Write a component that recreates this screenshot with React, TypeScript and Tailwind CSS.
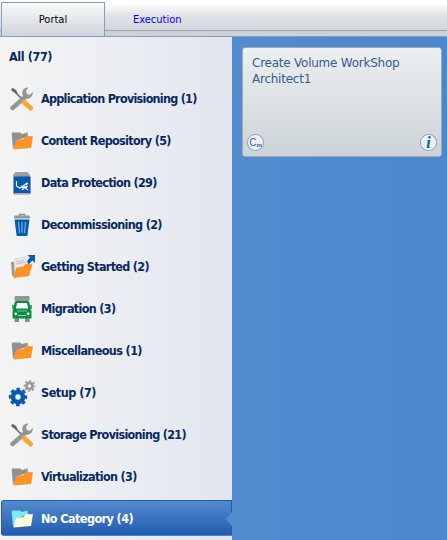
import type { ReactNode } from "react";

function Tools() {
  return (
    <svg width="24" height="24" viewBox="0 0 24 24" fill="none">
      <path d="M1 2l2-1 3 2 2 4-2-.5-4-2.500z" fill="#666" />
      <path d="M5 5l8 8" stroke="#666" strokeWidth="1.600" />
      <path d="M2.500 21L15 10" stroke="#949494" strokeWidth="4.400" strokeLinecap="round" />
      <path d="M18.500 .5c-5-.5-7.500 4-5.500 8.500 2 4 9.500 4 10-4L19.500 8 16.500 6.500 16.200 3.500z" fill="#949494" />
      <path d="M14.500 15.500L20.500 21" stroke="#ffa62b" strokeWidth="5" strokeLinecap="round" />
    </svg>
  );
}

function Folder({ active = false }: { active?: boolean }) {
  return (
    <svg width="24" height="24" viewBox="0 0 24 24">
      <path d="M3 20L1.700 4.500Q1.700 3.500 3 3.500h7l2 1.500 5.500-1.500.5 4L8 11z" fill={active ? "#7deaf5" : "#929292"} />
      <path d="M3.500 20.500L6 11 13.500 10 16 7l7 .2-2 11.800z" fill={active ? "#fffbd8" : "#fd9525"} />
    </svg>
  );
}

function DataJar() {
  return (
    <svg width="24" height="24" viewBox="0 0 24 24">
      <path d="M5.500 1h12l2.500 3v4h-17V4z" fill="#a0a0a0" />
      <rect x="3.500" y="5" width="17" height="18" rx="1.500" fill="#0759ae" stroke="#959595" />
      <path d="M5 22.500h14" stroke="#aaa" />
      <path d="M6.500 10v5l4 2.500M9 16.500h8M11 15l3 2-2 2M17 12l-4 3 4 1M16 14l2-2M15 17l3 2M15 16l3-1" fill="none" stroke="#e5f2ff" strokeWidth="1.200" />
    </svg>
  );
}

function Trash() {
  return (
    <svg width="24" height="24" viewBox="0 0 24 24">
      <path d="M9.500 3V1.500h5V3" fill="none" stroke="#8c9393" strokeWidth="1.500" />
      <rect x="4" y="2.500" width="16" height="3" rx="1" fill="#929898" />
      <path d="M4.500 6.500h15l-2 15.500q0 1-1 1h-9q-1 0-1-1z" fill="#075cae" />
      <path d="M8.500 9l1 11M12 9v11M15.500 9l-1 11" stroke="#79a9d7" strokeWidth="1.200" />
    </svg>
  );
}

function GettingStarted() {
  return (
    <svg width="26" height="26" viewBox="0 0 26 26">
      <path d="M3 22L2 8h3l1 14z" fill="#9a9a9a" />
      <path d="M5 5l11-2 2 14-11 4z" fill="#e6e6e6" stroke="#ccc" strokeWidth=".6" />
      <path d="M7 8l8-1.500M7.500 10l8-1.500" stroke="#b5b5b5" strokeWidth=".8" />
      <path d="M4 24l3.500-10.500 7-1 2-2.500 7 .2L20 22z" fill="#fb9224" />
      <path d="M18.500 1H26v8l-2.500-2.500-4 4L18 7l3-3.500z" fill="#075bb0" />
    </svg>
  );
}

function Truck() {
  return (
    <svg width="26" height="28" viewBox="0 0 26 28">
      <rect x="5.500" y="1" width="15" height="5" rx="1" fill="#969696" />
      <path d="M5.500 22h4.500v5H5.500zM16 22h4.500v5H16z" fill="#8b8b8b" />
      <path d="M7.500 6h11q1.500 0 2 1.500L21.500 14l1 2v7.500h-19V16l1-2 1-6.500q.5-1.500 2-1.500z" fill="#078f41" />
      <path d="M8 8h10l1 5.500H7z" fill="#fff" />
      <path d="M8 16h10" stroke="#7bc496" />
      <circle cx="6.800" cy="18.800" r="1.400" fill="#fff" />
      <circle cx="19.200" cy="18.800" r="1.400" fill="#fff" />
      <path d="M9 20.500h8" stroke="#a0d4b4" />
      <path d="M4 10v4M22 10v4" stroke="#078f41" strokeWidth="1.500" />
    </svg>
  );
}

function Gears() {
  return (
    <svg width="28" height="28" viewBox="0 0 28 28" fill="none">
      <circle cx="10" cy="18" r="5" stroke="#075bab" strokeWidth="4.600" />
      <circle cx="10" cy="18" r="8" stroke="#075bab" strokeWidth="2.400" strokeDasharray="3.600 2.683" strokeDashoffset="1.800" />
      <circle cx="21.500" cy="7" r="3.100" stroke="#989898" strokeWidth="2.600" />
      <circle cx="21.500" cy="7" r="5" stroke="#989898" strokeWidth="1.600" strokeDasharray="2.100 1.827" strokeDashoffset="1.050" />
    </svg>
  );
}

type Category = { label: string; tracking: string; icon: ReactNode };

const categories: Category[] = [
  { label: "Application Provisioning (1)", tracking: "tracking-[-0.75px]", icon: <Tools /> },
  { label: "Content Repository (5)", tracking: "tracking-[-0.69px]", icon: <Folder /> },
  { label: "Data Protection (29)", tracking: "tracking-[-0.71px]", icon: <DataJar /> },
  { label: "Decommissioning (2)", tracking: "tracking-[-0.67px]", icon: <Trash /> },
  { label: "Getting Started (2)", tracking: "tracking-[-0.7px]", icon: <GettingStarted /> },
  { label: "Migration (3)", tracking: "tracking-[-0.68px]", icon: <Truck /> },
  { label: "Miscellaneous (1)", tracking: "tracking-[-0.62px]", icon: <Folder /> },
  { label: "Setup (7)", tracking: "tracking-[-0.47px]", icon: <Gears /> },
  { label: "Storage Provisioning (21)", tracking: "tracking-[-0.71px]", icon: <Tools /> },
  { label: "Virtualization (3)", tracking: "tracking-[-0.67px]", icon: <Folder /> },
];

function IconSlot({ children }: { children: ReactNode }) {
  return <span className="flex w-7 shrink-0 items-center justify-center">{children}</span>;
}

export default function App() {
  return (
    <div className="flex h-[540px] w-[447px] flex-col overflow-hidden font-['DejaVu_Sans_Condensed','Noto_Sans',sans-serif]">
      <header className="flex h-[37px] shrink-0 border-b border-[#829dbe] bg-linear-to-b from-white from-10% to-[#ccd2d6] to-30% text-[11px]">
        <div className="h-[31px] w-px border-b border-[#98a3af] bg-linear-to-b from-white to-[#d1d5d9]" />
        <div className="mt-[2px] flex w-[104px] items-center justify-center border border-b-0 border-[#839fc0] bg-linear-to-b from-[#fafafa] via-[#e6e7ea] to-[#d0d5d9] pt-[2px] text-black">
          <span>Portal</span>
        </div>
        <div className="flex h-[31px] flex-1 border-b border-[#98a3af] bg-linear-to-b from-white from-10% via-[#e3e4e8] via-50% to-[#d1d5d9] pl-[28px] pt-[12px] leading-4 text-[#0000ff]">
          <span>Execution</span>
        </div>
      </header>

      <main className="flex min-h-0 flex-1">
        <nav className="flex w-[232px] shrink-0 flex-col bg-linear-to-r from-[#f4f4f4] to-[#e1e6ef] text-[12.5px] font-bold text-[#08285e]">
          <div className="flex h-10 shrink-0 items-center pl-[9px] tracking-[-0.4px]">All (77)</div>
          {categories.map(({ label, tracking, icon }) => (
            <div key={label} className="flex h-[42px] shrink-0 items-center pl-2 pt-[2px]">
              <IconSlot>{icon}</IconSlot>
              <span className={`ml-[5px] whitespace-nowrap ${tracking}`}>{label}</span>
            </div>
          ))}
          <div className="ml-px mt-[3px] flex h-9 shrink-0 items-center rounded-l-[3px] border border-[#245bac] border-b-[#4f83c8] bg-linear-to-b from-[#538bd0] to-[#215caf] pl-[6px] pt-[2px] text-white">
            <IconSlot><Folder active /></IconSlot>
            <span className="ml-[5px] whitespace-nowrap tracking-[-0.57px]">No Category (4)</span>
            <svg className="-mr-px ml-auto" width="8" height="16" viewBox="0 0 8 16">
              <path d="M8 1L1 8l7 7z" fill="#538bd0" />
              <path d="M8 1L1 8l7 7" fill="none" stroke="#3c75be" />
            </svg>
          </div>
        </nav>

        <section className="flex-1 bg-linear-to-r from-[#538ccf] to-[#4d86cb] pl-[10px] pt-[10px]">
          <article className="flex h-[110px] w-[200px] flex-col justify-between rounded-[3px] border border-[#9baab9] bg-linear-to-b from-[#edeff0] to-[#cbd3d7] pb-[5px] pl-[4px] pr-1 pt-[7px]">
            <h2 className="whitespace-nowrap pl-[5px] font-['DejaVu_Sans',sans-serif] text-[12px] leading-4 tracking-[-0.24px] text-[#345c8f]">
              Create Volume WorkShop<br />Architect1
            </h2>
            <div className="flex items-center justify-between">
              <span className="flex size-[17px] items-center justify-center rounded-full border border-[#829dc0] bg-[#eaf0f8] text-[#36609a] shadow-[inset_0_0_0_1px_#fff]">
                <span className="font-['Liberation_Sans',sans-serif] text-[10px] leading-3">C</span>
                <span className="pt-1 font-['Liberation_Sans',sans-serif] text-[6px] font-bold leading-2">m</span>
              </span>
              <span className="flex size-[17px] items-center justify-center rounded-full border border-[#829dc0] bg-[#eaf0f8] font-['Liberation_Serif',serif] text-[16px] font-bold italic leading-4 text-[#20579a] shadow-[inset_0_0_0_1px_#fff]">i</span>
            </div>
          </article>
        </section>
      </main>
    </div>
  );
}
